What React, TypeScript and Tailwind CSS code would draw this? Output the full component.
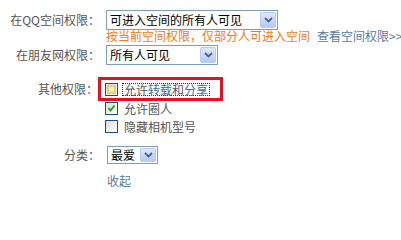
import React from 'react';

const font = { fontFamily: '"Noto Sans CJK SC", "Liberation Sans", sans-serif' };

const Arrow = () => (
  <span className="m-[1px] ml-auto flex w-[16px] shrink-0 self-stretch items-center justify-center rounded-[2px] border border-[#b9cbf3] bg-gradient-to-b from-[#dfe8fd] to-[#b5c9f6]">
    <svg width="9" height="6" viewBox="0 0 9 6">
      <path d="M1 1 L4.5 4.5 L8 1" fill="none" stroke="#4d6185" strokeWidth="1.8" />
    </svg>
  </span>
);

const Select = ({ value, width }: { value: string; width: string }) => (
  <div className={`flex items-stretch border border-[#7f9db9] bg-white text-black ${width}`}>
    <span className="flex items-center pl-[3px] leading-none">{value}</span>
    <Arrow />
  </div>
);

const Checkbox = ({ checked, hover }: { checked?: boolean; hover?: boolean }) => (
  <span className="flex h-[13px] w-[13px] shrink-0 items-center justify-center border border-[#1c5180] bg-gradient-to-br from-[#dcdcd7] to-[#ffffff]">
    {hover && <span className="h-[9px] w-[9px] border-2 border-[#f9c96a] bg-[#f8f0d6]" />}
    {checked && (
      <svg width="9" height="9" viewBox="0 0 9 9">
        <path d="M1.5 4 L3.5 6.5 L7.5 1.5" fill="none" stroke="#21a121" strokeWidth="2" />
      </svg>
    )}
  </span>
);

export default function App() {
  return (
    <div className="h-[202px] w-[401px] overflow-hidden bg-white pt-[10px] text-[12px] text-[#555]" style={font}>
      <div className="flex h-[20px] items-center">
        <span className="w-[100px] text-right">在QQ空间权限：</span>
        <div className="ml-[6px]">
          <Select value="可进入空间的所有人可见" width="h-[20px] w-[172px]" />
        </div>
      </div>
      <div className="ml-[106px] flex h-[12px] items-center whitespace-nowrap leading-none">
        <span className="text-[#f27a1a]">按当前空间权限，仅部分人可进入空间</span>
        <span className="ml-[7px] text-[#5779a3]">查看空间权限&gt;&gt;</span>
      </div>
      <div className="mt-[3px] flex h-[20px] items-center">
        <span className="w-[100px] text-right">在朋友网权限：</span>
        <div className="ml-[6px]">
          <Select value="所有人可见" width="h-[20px] w-[112px]" />
        </div>
      </div>
      <div className="mt-[12px] flex items-start">
        <span className="flex h-[24px] w-[98px] items-center justify-end">其他权限：</span>
        <div className="flex flex-col">
          <div className="flex h-[24px] w-[125px] items-center border-[3px] border-[#e3101d] pl-[4px]">
            <Checkbox hover />
            <span className="ml-[4px] border border-dotted border-[#333] px-[1px] leading-[11px]">
              允许<span className="text-[#3b6fa6]">转载</span>和<span className="text-[#3b6fa6]">分享</span>
            </span>
          </div>
          <div className="flex h-[15px] items-center pl-[7px]">
            <Checkbox checked />
            <span className="ml-[6px]">允许圈人</span>
          </div>
          <div className="mt-[3px] flex h-[15px] items-center pl-[7px]">
            <Checkbox />
            <span className="ml-[6px]">隐藏相机型号</span>
          </div>
        </div>
      </div>
      <div className="mt-[12px] flex h-[18px] items-center">
        <span className="w-[100px] text-right">分类：</span>
        <div className="ml-[7px]">
          <Select value="最爱" width="h-[18px] w-[51px]" />
        </div>
      </div>
      <div className="ml-[107px] mt-[11px] text-[#5779a3] leading-none">收起</div>
    </div>
  );
}
